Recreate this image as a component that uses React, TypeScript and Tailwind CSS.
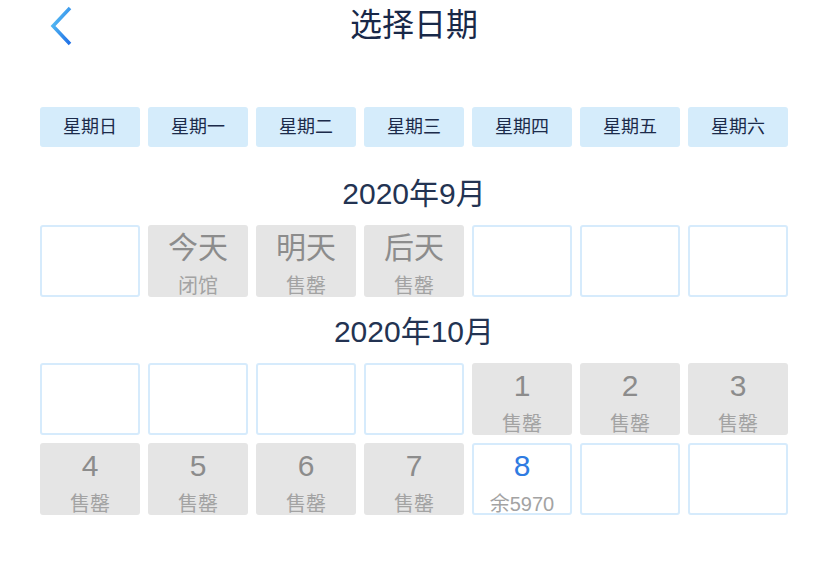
import React from "react";

type Cell = { top?: string; sub?: string; kind: "empty" | "off" | "open" };

const weekdays = ["星期日", "星期一", "星期二", "星期三", "星期四", "星期五", "星期六"];

const months: { title: string; cells: Cell[] }[] = [
  {
    title: "2020年9月",
    cells: [
      { kind: "empty" },
      { kind: "off", top: "今天", sub: "闭馆" },
      { kind: "off", top: "明天", sub: "售罄" },
      { kind: "off", top: "后天", sub: "售罄" },
      { kind: "empty" },
      { kind: "empty" },
      { kind: "empty" },
    ],
  },
  {
    title: "2020年10月",
    cells: [
      { kind: "empty" },
      { kind: "empty" },
      { kind: "empty" },
      { kind: "empty" },
      { kind: "off", top: "1", sub: "售罄" },
      { kind: "off", top: "2", sub: "售罄" },
      { kind: "off", top: "3", sub: "售罄" },
      { kind: "off", top: "4", sub: "售罄" },
      { kind: "off", top: "5", sub: "售罄" },
      { kind: "off", top: "6", sub: "售罄" },
      { kind: "off", top: "7", sub: "售罄" },
      { kind: "open", top: "8", sub: "余5970" },
      { kind: "empty" },
      { kind: "empty" },
    ],
  },
];

const DayCell = ({ cell }: { cell: Cell }) => {
  if (cell.kind === "empty") {
    return <div className="h-[72px] rounded-[3px] border-2 border-[#d6ebfc] bg-white" />;
  }
  const open = cell.kind === "open";
  return (
    <div
      className={
        open
          ? "h-[72px] rounded-[3px] border-2 border-[#d6ebfc] bg-white flex flex-col items-center overflow-hidden"
          : "h-[72px] rounded-[3px] border-2 border-transparent bg-[#e5e5e5] flex flex-col items-center overflow-hidden"
      }
    >
      <div className={open ? "mt-[3px] text-[30px] leading-[36px] text-[#2f7be2]" : "mt-[3px] text-[30px] leading-[36px] text-[#8c8c8c]"}>
        {cell.top}
      </div>
      <div className="mt-[8px] shrink-0 text-[20px] leading-[24px] text-[#a3a3a3]">{cell.sub}</div>
    </div>
  );
};

export default function App() {
  return (
    <div
      className="w-[828px] h-[581px] bg-white"
      style={{ fontFamily: '"Liberation Sans", "Noto Sans CJK SC", sans-serif' }}
    >
      <header className="grid grid-cols-[120px_1fr_120px] items-center h-[50px]">
        <div className="pl-[48px] pt-[2px]">
          <svg width="26" height="42" viewBox="0 0 26 42">
            <defs>
              <linearGradient id="bk" x1="0" y1="0" x2="1" y2="1">
                <stop offset="0" stopColor="#5ec8f5" />
                <stop offset="1" stopColor="#1f6fe6" />
              </linearGradient>
            </defs>
            <path d="M22 3 L5 21 L22 39" fill="none" stroke="url(#bk)" strokeWidth="3.5" strokeLinecap="butt" />
          </svg>
        </div>
        <h1 className="text-center text-[32px] leading-[40px] text-[#182848]">选择日期</h1>
        <div />
      </header>

      <div className="px-[40px]">
        <div className="mt-[57px] grid grid-cols-7 gap-[8px]">
          {weekdays.map((d) => (
            <div
              key={d}
              className="h-[40px] rounded-[3px] bg-[#d5ecfb] flex items-center justify-center text-[18px] text-[#1c2b4a]"
            >
              {d}
            </div>
          ))}
        </div>

        {months.map((m, i) => (
          <section key={m.title} className={i === 0 ? "mt-[29px]" : "mt-[17px]"}>
            <h2 className="text-center text-[30px] leading-[36px] text-[#233352] mb-[13px]">{m.title}</h2>
            <div className="grid grid-cols-7 gap-[8px]">
              {m.cells.map((c, j) => (
                <DayCell key={j} cell={c} />
              ))}
            </div>
          </section>
        ))}
      </div>
    </div>
  );
}
